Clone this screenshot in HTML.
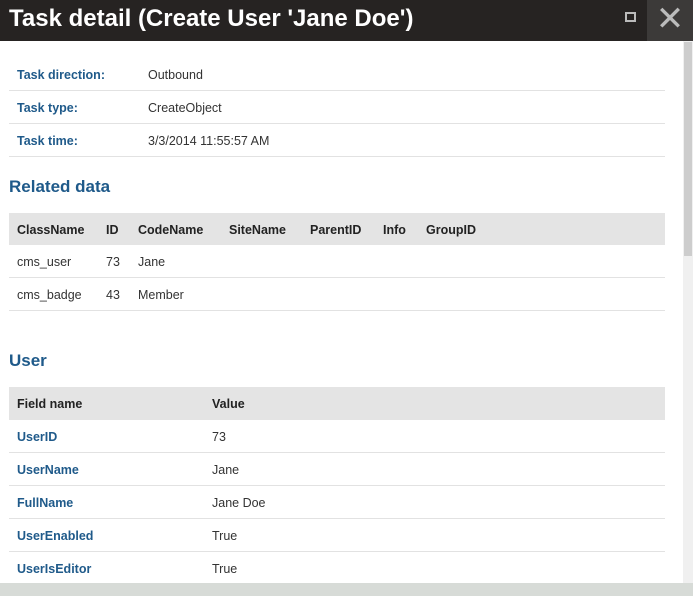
<!DOCTYPE html>
<html><head><style>
*{margin:0;padding:0;box-sizing:border-box}
body{width:693px;height:596px;overflow:hidden;background:#fff;font-family:"Liberation Sans",sans-serif;font-size:12.5px;color:#333;position:relative}
.hdr{position:absolute;left:0;top:0;width:693px;height:41px;background:#262322}
.hdr h1{position:absolute;left:9px;top:5px;color:#fff;font-size:24px;font-weight:bold;letter-spacing:0}
.mx{position:absolute;left:625px;top:12px;width:11px;height:10px;border:2px solid #bbb}
.cl{position:absolute;left:647px;top:0;width:46px;height:41px;background:#3c3a39;color:#bbb;font-size:34px;text-align:center;line-height:38px}
.sb{position:absolute;left:683px;top:41px;width:10px;height:542px;background:#f0f0f0}
.th{position:absolute;left:684px;top:42px;width:8px;height:214px;background:#cdcdcd}
.foot{position:absolute;left:0;top:583px;width:693px;height:13px;background:#d7dbd7}
.r{position:absolute;left:9px;width:656px;height:33px;border-bottom:1px solid #e2e2e2}
.r span{position:absolute;top:10px}
.g{background:#e4e4e4;border:none;color:#222;font-weight:bold}
.b{color:#1f5a8a;font-weight:bold}
h2{position:absolute;left:9px;color:#1f5a8a;font-size:17px;font-weight:bold}
</style></head><body>
<div class="hdr"><h1>Task detail (Create User 'Jane Doe')</h1><div class="mx"></div><div class="cl">✕</div></div>
<div class="r" style="top:58px"><span class="b" style="left:8px">Task direction:</span><span style="left:139px">Outbound</span></div>
<div class="r" style="top:91px"><span class="b" style="left:8px">Task type:</span><span style="left:139px">CreateObject</span></div>
<div class="r" style="top:124px"><span class="b" style="left:8px">Task time:</span><span style="left:139px">3/3/2014 11:55:57 AM</span></div>
<h2 style="top:177px">Related data</h2>
<div class="r g" style="top:213px;height:32px"><span style="left:8px">ClassName</span><span style="left:97px">ID</span><span style="left:129px">CodeName</span><span style="left:220px">SiteName</span><span style="left:301px">ParentID</span><span style="left:374px">Info</span><span style="left:417px">GroupID</span></div>
<div class="r" style="top:245px"><span style="left:8px">cms_user</span><span style="left:97px">73</span><span style="left:129px">Jane</span></div>
<div class="r" style="top:278px"><span style="left:8px">cms_badge</span><span style="left:97px">43</span><span style="left:129px">Member</span></div>
<h2 style="top:351px">User</h2>
<div class="r g" style="top:387px;height:33px"><span style="left:8px">Field name</span><span style="left:203px">Value</span></div>
<div class="r" style="top:420px"><span class="b" style="left:8px">UserID</span><span style="left:203px">73</span></div>
<div class="r" style="top:453px"><span class="b" style="left:8px">UserName</span><span style="left:203px">Jane</span></div>
<div class="r" style="top:486px"><span class="b" style="left:8px">FullName</span><span style="left:203px">Jane Doe</span></div>
<div class="r" style="top:519px"><span class="b" style="left:8px">UserEnabled</span><span style="left:203px">True</span></div>
<div class="r" style="top:552px"><span class="b" style="left:8px">UserIsEditor</span><span style="left:203px">True</span></div>
<div class="sb"></div><div class="th"></div>
<div class="foot"></div>
</body></html>
